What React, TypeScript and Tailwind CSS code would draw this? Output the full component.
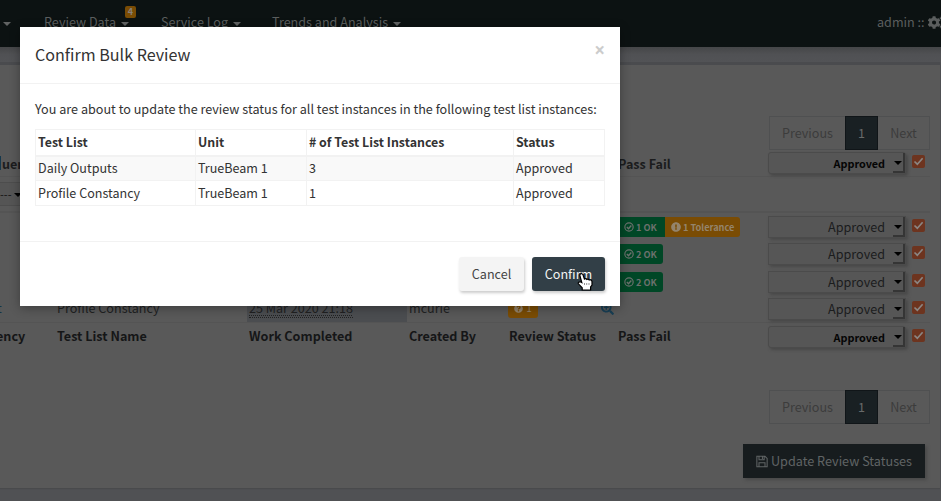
import React from "react";
import { FaCogs, FaSearchPlus, FaExclamationCircle, FaQuestionCircle } from "react-icons/fa";

const Caret = ({ className = "" }: { className?: string }) => (
  <span className={`inline-block h-0 w-0 border-x-4 border-t-4 border-x-transparent ${className}`} />
);

const NavItem = ({ label, className }: { label: string; className: string }) => (
  <div className={`flex shrink-0 items-center gap-[5px] text-[12.6px] text-[#5b5e5e] ${className}`}>
    <span>{label}</span>
    <Caret className="mt-[3px] border-t-[#626464]" />
  </div>
);

const Check = () => (
  <span className="flex h-[13px] w-[13px] shrink-0 items-center justify-center rounded-[2px] bg-[#6d341f]">
    <svg viewBox="0 0 12 12" className="h-[13px] w-[13px]" fill="none" stroke="#8b8683" strokeWidth="1.5">
      <path d="M2.3 6 L4.9 8.5 L9.8 3" />
    </svg>
  </span>
);

const StatusSelect = ({ bold = false }: { bold?: boolean }) => (
  <div
    className={`flex h-[22px] w-[138px] shrink-0 items-center justify-end border border-[#4b4b4b] bg-[#565656] shadow-[2px_2px_3px_#484848] ${
      bold ? "rounded-[3px] text-[10.8px] font-bold text-[#050505]" : "text-[12.6px] text-[#1b1c1d]"
    }`}
  >
    <span className={bold ? "pb-px leading-5" : "leading-5"}>Approved</span>
    <span className="ml-[8px] flex h-[20px] w-[12px] items-center justify-center border-r-2 border-b-2 border-[#353535] pt-px">
      <Caret className="shrink-0 border-x-[4px] border-t-black" />
    </span>
  </div>
);

const Pager = () => (
  <div className="ml-[769px] flex h-[34px] w-[161px] text-[12.6px] text-[#3c3c3c]">
    <div className="flex w-[76px] items-center justify-center border border-r-0 border-[#4f5051] pb-px">Previous</div>
    <div className="flex w-[33px] items-center justify-center border border-[#101518] bg-[#192023] pb-px text-[#686a6a]">1</div>
    <div className="flex w-[52px] items-center justify-center border border-l-0 border-[#4f5051] pb-px">Next</div>
  </div>
);

const OkCircle = () => (
  <svg viewBox="0 0 12 12" className="h-[10px] w-[10px]" fill="none" stroke="currentColor" strokeWidth="1.4">
    <circle cx="6" cy="6" r="5" />
    <path d="M3.4 6 L5.4 8 L8.8 4.3" strokeWidth="1.7" />
  </svg>
);

const Ok = ({ n, className = "" }: { n: number; className?: string }) => (
  <span className={`flex h-[20px] shrink-0 items-center gap-[2px] bg-[#004726] text-[9.2px] font-bold text-[#6c716e] ${className}`}>
    <OkCircle />
    <span>{n} OK</span>
  </span>
);

const Row = ({
  height,
  border = "",
  left,
  pass,
  bold = false,
  selectPad = "pt-[3px]",
  passPad = "pt-[4px]",
}: {
  height: string;
  border?: string;
  left?: React.ReactNode;
  pass?: React.ReactNode;
  bold?: boolean;
  selectPad?: string;
  passPad?: string;
}) => (
  <div className={`flex w-[930px] ${height} ${border}`}>
    <div className="flex w-[618px] shrink-0">{left}</div>
    <div className={`flex w-[150px] shrink-0 items-start ${passPad}`}>{pass}</div>
    <div className={`flex items-start gap-[6px] ${selectPad}`}>
      <StatusSelect bold={bold} />
      <div className="pt-[3px]">
        <Check />
      </div>
    </div>
  </div>
);

const modalRows = [
  ["Daily Outputs", "TrueBeam 1", "3", "Approved"],
  ["Profile Constancy", "TrueBeam 1", "1", "Approved"],
];

export default function App() {
  return (
    <div className="relative h-[501px] w-[941px] overflow-hidden bg-[#505154] font-['Noto_Sans_CJK_SC','Noto_Sans',sans-serif] leading-5 whitespace-nowrap">
      <nav className="flex h-[47px] items-start bg-[#0c1212] pt-[12px]">
        <div className="flex h-5 w-[44px] shrink-0 items-center pt-[3px] pl-[3px]">
          <Caret className="border-t-[#626464]" />
        </div>
        <div className="relative w-[117px] shrink-0">
          <NavItem label="Review Data" className="" />
          <span className="absolute -top-[6px] left-[81px] flex h-[12px] w-[11px] items-center justify-center rounded-[2px] bg-[#7a4c04] text-[9px] font-bold text-[#88817a]">
            4
          </span>
        </div>
        <NavItem label="Service Log" className="w-[111px]" />
        <NavItem label="Trends and Analysis" className="w-[605px]" />
        <div className="flex shrink-0 items-center text-[12.6px] text-[#5b5e5e]">
          <span className="w-[51px]">admin ::</span>
          <FaCogs className="h-[15px] w-[18px] shrink-0" />
        </div>
      </nav>
      <div className="h-[15px] bg-linear-to-b from-[#454648] via-[#505154] to-[#525356]" />
      <main className="h-[426px] w-[940px] border-t-[3px] border-[#4a4b4e] bg-[#595959] pt-[51px] shadow-[0_1px_1px_#494a4c]">
        <Pager />
        <Row
          height="h-[27px]"
          border="border-b border-[#545454]"
          bold
          selectPad="pt-[2px]"
          passPad="pt-[4px]"
          left={
            <div className="flex items-start pt-[6px] text-[12.6px] font-bold text-[#1b1c1d]">
              <span className="h-[14px] w-px bg-[#15384d]" />
              <span className="-mt-[2px] pl-px">uen</span>
            </div>
          }
          pass={<span className="text-[12.6px] font-bold text-[#1b1c1d]">Pass Fail</span>}
        />
        <div className="flex h-[36px] w-[930px] items-center border-b-2 border-[#545454]">
          <div className="flex h-[24px] w-[100px] items-center border border-l-0 border-[#4d4d4d] bg-[#555] text-[11px] text-[#111]">
            <span className="w-[14px]">---</span>
            <Caret className="mt-[2px] border-t-black" />
          </div>
        </div>
        <Row
          height="h-[27px]"
          pass={
            <div className="flex">
              <Ok n={1} className="w-[47px] pl-[6px]" />
              <span className="flex h-[20px] w-[75px] items-center gap-[2px] rounded-r-[3px] bg-[#7a4c04] pl-[6px] text-[9.2px] font-bold text-[#94846c]">
                <FaExclamationCircle className="h-[10px] w-[10px] shrink-0" />1 Tolerance
              </span>
            </div>
          }
        />
        <Row height="h-[28px]" pass={<Ok n={2} className="w-[45px] rounded-r-[3px] pl-[6px]" />} />
        <Row height="h-[27px]" pass={<Ok n={2} className="w-[45px] rounded-r-[3px] pl-[6px]" />} />
        <Row
          height="h-[28px]"
          border="border-b border-[#545454]"
          left={
            <div className="flex text-[12.6px] text-[#202122]">
              <div className="w-[57px] pt-[3px] text-[#153446]"><span className="-ml-[3px]">t</span></div>
              <div className="w-[190px] pt-[3px]">Profile Constancy</div>
              <div className="w-[160px] bg-[#4b4d50] pt-[3px] pl-[2px]">
                <span className="inline-block h-[20px] border-b border-dotted border-[#222] underline decoration-dotted decoration-1 underline-offset-2">
                  25 Mar 2020 21:18
                </span>
              </div>
              <div className="w-[101px] pt-[3px] pl-[2px]">mcurie</div>
              <div className="w-[93px] pt-[3px]">
                <span className="flex h-[20px] w-[30px] items-center justify-center gap-[3px] rounded-[3px] bg-[#7a4c04] text-[10px] text-[#94846c]">
                  <FaQuestionCircle className="h-[9px] w-[9px]" />1
                </span>
              </div>
              <FaSearchPlus className="mt-[7px] h-[13px] w-[13px] text-[#183f55]" />
            </div>
          }
        />
        <Row
          height="h-[67px]"
          bold
          passPad="pt-[3px]"
          left={
            <div className="flex pt-[3px] text-[12.6px] font-bold text-[#151617]">
              <span className="flex w-[57px]"><span className="-ml-[4px]">ency</span></span>
              <span className="w-[192px]">Test List Name</span>
              <span className="w-[160px]">Work Completed</span>
              <span className="w-[100px]">Created By</span>
              <span>Review Status</span>
            </div>
          }
          pass={<span className="text-[12.6px] font-bold text-[#151617]">Pass Fail</span>}
        />
        <Pager />
        <button className="mt-[20px] ml-[743px] flex h-[34px] w-[182px] items-center justify-center gap-[3px] bg-[#171c1e] text-[12.65px] text-[#606465] shadow-[2px_2px_3px_#494949]">
          <svg viewBox="0 0 14 14" className="h-[13px] w-[12px]" fill="none" stroke="currentColor" strokeWidth="1.2">
            <path d="M1 1 H10.5 L13 3.5 V13 H1 Z M3.5 1 V5 H9.5 V1 M3.5 13 V8.5 H10.5 V13 M7.5 1.5 V4" />
          </svg>
          <span className="pb-px">Update Review Statuses</span>
        </button>
      </main>

      <section className="absolute top-[27px] left-[20px] h-[279px] w-[600px] bg-white text-[#333] shadow-[0_2px_10px_#0005]">
        <header className="flex h-[57px] justify-between border-b border-[#f2f2f2] px-[15px]">
          <h1 className="pt-[14px] text-[16.1px] leading-[26px]">Confirm Bulk Review</h1>
          <span className="pt-[13px] font-['Open_Sans',sans-serif] text-[19px] font-bold text-[#ccc]">×</span>
        </header>
        <div className="h-[158px] border-b border-[#f2f2f2] px-[15px] pt-[15px] text-[12.62px]">
          <p>You are about to update the review status for all test instances in the following test list instances:</p>
          <table className="mt-[10px] w-[569px] table-fixed border-collapse text-[12.55px]">
            <colgroup>
              <col className="w-[160px]" />
              <col className="w-[111px]" />
              <col className="w-[207px]" />
              <col className="w-[91px]" />
            </colgroup>
            <thead>
              <tr className="h-[26px] text-left text-[12.4px]">
                {["Test List", "Unit", "# of Test List Instances", "Status"].map((h) => (
                  <th key={h} className="border border-b-2 border-[#f2f2f2] px-[2px] py-0 font-bold">{h}</th>
                ))}
              </tr>
            </thead>
            <tbody>
              {modalRows.map((r, i) => (
                <tr key={r[0]} className={`h-[25px] ${i === 0 ? "bg-[#f9f9f9]" : ""}`}>
                  {r.map((c, j) => (
                    <td key={j} className="border border-[#f2f2f2] px-[2px] py-0">{c}</td>
                  ))}
                </tr>
              ))}
            </tbody>
          </table>
        </div>
        <footer className="flex justify-end gap-[8px] pt-[15px] pr-[15px] text-[12.6px]">
          <button className="h-[34px] w-[65px] rounded-[3px] bg-[#f4f4f4] pb-px text-[#444] shadow-[1px_2px_3px_#ccc]">Cancel</button>
          <button className="h-[34px] w-[73px] rounded-[3px] bg-[#323f47] pb-px text-[#f4f4f4] shadow-[1px_2px_3px_#ccc]">Confirm</button>
        </footer>
      </section>
      <svg className="absolute top-[273px] left-[577px]" width="17" height="18" viewBox="0 0 17 18">
        <path
          d="M3.5 1 Q5 0 6 1.8 L7.4 6 Q9 5 9.8 6.4 Q11.4 5.6 12.2 7 Q14.5 6.4 15 8.5 V12 L13.6 14 V17 H5.2 V14.8 L1.4 10.8 Q.7 8.8 3.2 8.8 L4.8 9.6 L3 3 Q2.5 1.5 3.5 1 Z"
          fill="white"
          stroke="black"
          strokeWidth="1.2"
        />
        <path d="M7.5 10 V12 M9.7 10 V12 M12 10 V12" stroke="#777" strokeWidth=".8" />
      </svg>
    </div>
  );
}
